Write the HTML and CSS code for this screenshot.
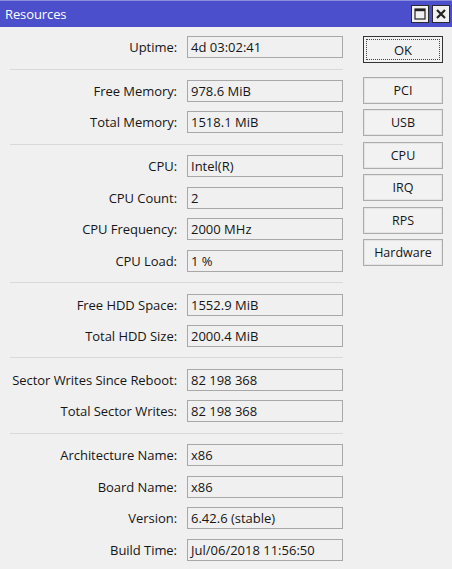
FILE: index.html
```html
<!DOCTYPE html>
<html>
<head>
<meta charset="utf-8">
<link rel="stylesheet" href="styles.css">
</head>
<body>
<div class="window">
  <div class="titlebar">
    <span class="title">Resources</span>
    <div class="tb-buttons">
      <span class="tb-btn"><svg width="12" height="12" viewBox="0 0 12 12"><rect x="1" y="1" width="10" height="10" fill="none" stroke="#222" stroke-width="1.2"/><rect x="1" y="1" width="10" height="2.2" fill="#222"/></svg></span>
      <span class="tb-btn"><svg width="12" height="12" viewBox="0 0 12 12"><path d="M2 2 L10 10 M10 2 L2 10" stroke="#222" stroke-width="2.2" fill="none"/></svg></span>
    </div>
  </div>
  <div class="content">
    <div class="form">
      <div class="group">
        <div class="row"><label>Uptime:</label><div class="field">4d 03:02:41</div></div>
      </div>
      <div class="sep"></div>
      <div class="group">
        <div class="row"><label>Free Memory:</label><div class="field">978.6 MiB</div></div>
        <div class="row"><label>Total Memory:</label><div class="field">1518.1 MiB</div></div>
      </div>
      <div class="sep"></div>
      <div class="group">
        <div class="row"><label>CPU:</label><div class="field">Intel(R)</div></div>
        <div class="row"><label>CPU Count:</label><div class="field">2</div></div>
        <div class="row"><label>CPU Frequency:</label><div class="field">2000 MHz</div></div>
        <div class="row"><label>CPU Load:</label><div class="field">1 %</div></div>
      </div>
      <div class="sep"></div>
      <div class="group">
        <div class="row"><label>Free HDD Space:</label><div class="field">1552.9 MiB</div></div>
        <div class="row"><label>Total HDD Size:</label><div class="field">2000.4 MiB</div></div>
      </div>
      <div class="sep"></div>
      <div class="group">
        <div class="row"><label>Sector Writes Since Reboot:</label><div class="field">82 198 368</div></div>
        <div class="row"><label>Total Sector Writes:</label><div class="field">82 198 368</div></div>
      </div>
      <div class="sep"></div>
      <div class="group">
        <div class="row"><label>Architecture Name:</label><div class="field">x86</div></div>
        <div class="row"><label>Board Name:</label><div class="field">x86</div></div>
        <div class="row"><label>Version:</label><div class="field">6.42.6 (stable)</div></div>
        <div class="row"><label>Build Time:</label><div class="field">Jul/06/2018 11:56:50</div></div>
      </div>
    </div>
    <div class="buttons">
      <div class="btn btn-default"><span class="focus">OK</span></div>
      <div class="btn-list">
        <div class="btn">PCI</div>
        <div class="btn">USB</div>
        <div class="btn">CPU</div>
        <div class="btn">IRQ</div>
        <div class="btn">RPS</div>
        <div class="btn">Hardware</div>
      </div>
    </div>
  </div>
</div>
</body>
</html>
```

FILE: styles.css
```css
html, body {
  margin: 0;
  padding: 0;
  background: #f0f0f0;
}
body {
  font-family: "Open Sans", "Liberation Sans", sans-serif;
  font-size: 13px;
  color: #161616;
}
.window {
  width: 452px;
  height: 569px;
  background: #f0f0f0;
}
.titlebar {
  height: 26px;
  background: #4b4fcb;
  border-top: 1px solid #8c8fe0;
  display: flex;
  align-items: center;
  justify-content: space-between;
  padding: 0 2px 0 5px;
}
.title {
  color: #ffffff;
  font-size: 13px;
  letter-spacing: -0.1px;
}
.tb-buttons {
  display: flex;
  gap: 3px;
  align-items: center;
}
.tb-btn {
  width: 16px;
  height: 16px;
  background: #f0f0f0;
  border: 1px solid #2a2a2a;
  display: flex;
  align-items: center;
  justify-content: center;
}
.tb-btn svg { display: block; }
.content {
  display: flex;
  padding: 9px 0 0 10px;
  gap: 20px;
}
.form {
  width: 333px;
  display: flex;
  flex-direction: column;
}
.group {
  display: flex;
  flex-direction: column;
  gap: 9.4px;
}
.row {
  display: grid;
  grid-template-columns: 167px 156px;
  column-gap: 10px;
  align-items: center;
  height: 22px;
}
.row label {
  text-align: right;
  white-space: nowrap;
  letter-spacing: -0.05px;
}
.field {
  height: 20px;
  line-height: 20px;
  border: 1px solid #a8a8a8;
  background: #f0f0f0;
  padding: 0 3px;
  white-space: nowrap;
  overflow: hidden;
}
.sep {
  height: 1px;
  background: #d9d9d9;
  margin: 10.5px 0 10.5px 0;
}
.buttons {
  width: 80px;
  display: flex;
  flex-direction: column;
}
.btn {
  height: 25px;
  box-sizing: content-box;
  border: 1px solid #acacac;
  box-shadow: inset 0 0 0 1px #e4e4e4;
  background: #f2f2f2;
  display: flex;
  align-items: center;
  justify-content: center;
  font-size: 12.5px;
}
.btn-default {
  height: 25px;
  border: 1px solid #333;
  box-shadow: none;
  padding: 0;
}
.focus {
  flex: 1;
  align-self: stretch;
  margin: 2px;
  border: 1px dotted #444;
  display: flex;
  align-items: center;
  justify-content: center;
  font-size: 13px;
}
.btn-list {
  margin-top: 14px;
  display: flex;
  flex-direction: column;
  gap: 5.4px;
}
```
